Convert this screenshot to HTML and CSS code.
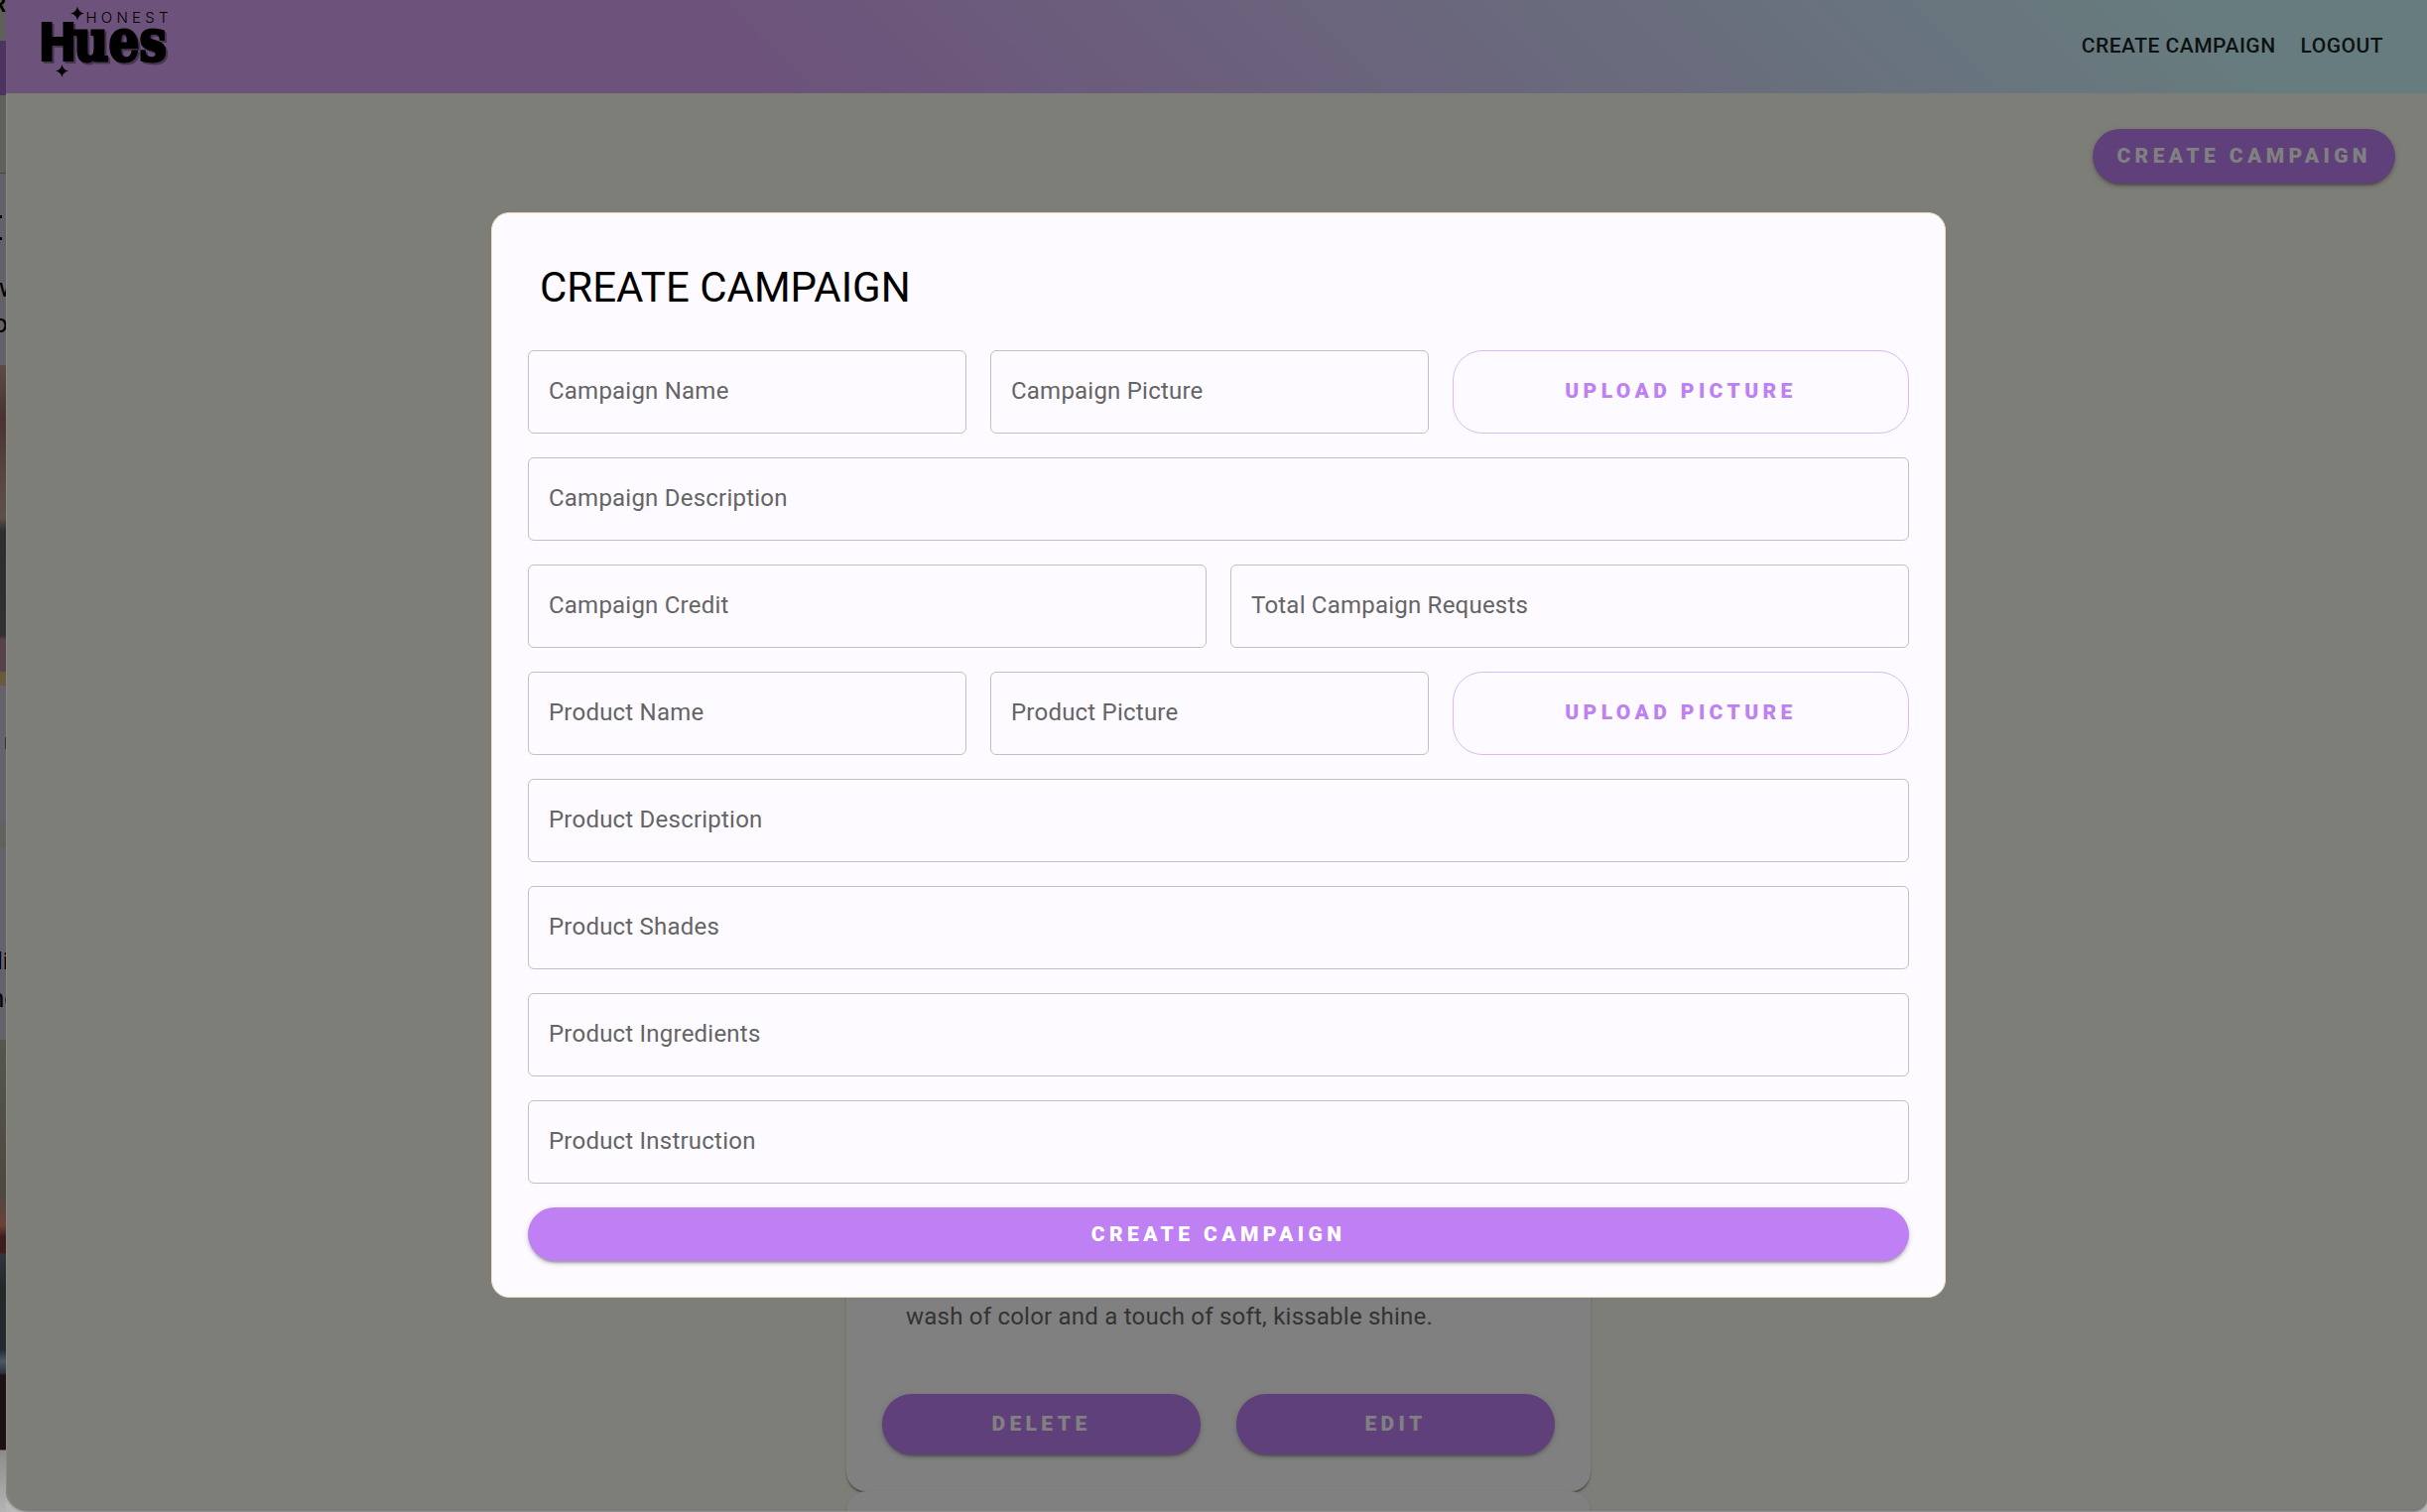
FILE: index.html
```html
<!DOCTYPE html>
<html lang="en">
<head>
<meta charset="utf-8">
<title>Honest Hues</title>
<link rel="stylesheet" href="styles.css">
</head>
<body>
<aside class="backwindow">
  <span class="bw-text bw-r">R</span>
  <span class="bw-text bw-v">w</span>
  <span class="bw-text bw-o">o</span>
  <span class="bw-text bw-li">li</span>
  <span class="bw-text bw-nc">nc</span>
</aside>
<div class="window">
  <header class="topbar">
    <svg class="logo" viewBox="0 0 140 90" role="img" aria-label="Honest Hues">
      <path d="M36 6.500 Q37 12.500 43 13.500 Q37 14.500 36 20.500 Q35 14.500 29 13.500 Q35 12.500 36 6.500Z"/>
      <path d="M20.500 65 Q21.500 70.500 27 71.500 Q21.500 72.500 20.500 78 Q19.500 72.500 14 71.500 Q19.500 70.500 20.500 65Z"/>
      <text class="logo-small" x="44.500" y="23" textLength="83">HONEST</text>
      <g class="logo-word">
        <text class="logo-h" x="-2" y="61" textLength="36" lengthAdjust="spacingAndGlyphs">H</text>
        <text class="logo-ues" x="32" y="61" textLength="94" lengthAdjust="spacingAndGlyphs">ues</text>
      </g>
    </svg>
    <nav class="nav">
      <a>CREATE CAMPAIGN</a>
      <a>LOGOUT</a>
    </nav>
  </header>
  <div class="toolbar">
    <button class="btn btn-dim">CREATE CAMPAIGN</button>
  </div>
  <main class="cards">
    <article class="card">
      <p class="card-text">wash of color and a touch of soft, kissable shine.</p>
      <div class="card-actions">
        <button class="btn btn-dim">DELETE</button>
        <button class="btn btn-dim">EDIT</button>
      </div>
    </article>
    <article class="card card-next"></article>
  </main>
</div>
<section class="modal">
  <h1 class="modal-title">CREATE CAMPAIGN</h1>
  <form class="form">
    <div class="row row-upload">
      <label class="field">Campaign Name</label>
      <label class="field">Campaign Picture</label>
      <button type="button" class="upload">UPLOAD PICTURE</button>
    </div>
    <label class="field">Campaign Description</label>
    <div class="row row-half">
      <label class="field">Campaign Credit</label>
      <label class="field">Total Campaign Requests</label>
    </div>
    <div class="row row-upload">
      <label class="field">Product Name</label>
      <label class="field">Product Picture</label>
      <button type="button" class="upload">UPLOAD PICTURE</button>
    </div>
    <label class="field">Product Description</label>
    <label class="field">Product Shades</label>
    <label class="field">Product Ingredients</label>
    <label class="field">Product Instruction</label>
    <button type="button" class="btn btn-submit">CREATE CAMPAIGN</button>
  </form>
</section>
</body>
</html>
```
FILE: styles.css
```css
* { box-sizing: border-box; }
body {
  margin: 0;
  width: 2446px;
  height: 1524px;
  position: relative;
  overflow: hidden;
  display: flex;
  background: #b8b8b8;
  font-family: Roboto, "Liberation Sans", sans-serif;
}
/* sliver of the window lying behind */
.backwindow {
  width: 6px;
  height: 1524px;
  flex: none;
  position: relative;
  background:
    linear-gradient(#000, #000) 0 217px / 2px 3px no-repeat,
    linear-gradient(#000, #000) 0 239px / 2px 3px no-repeat,
    linear-gradient(#333, #333) 5px 743px / 1px 12px no-repeat,
    linear-gradient(180deg,
    #5f5f5b 0 41px, #4c3360 41px 96px, #60605c 96px 174px, #444 174px 175px, #64606a 175px 368px,
    #5c4c44 368px, #4a3232 421px, #5a4843 490px, #5c5048 522px, #2d2e30 535px, #303132 640px,
    #57414b 645px 676px, #6a5a3c 678px 691px, #66626c 691px 830px, #62625c 830px 855px,
    #66626c 855px 1048px, #55574f 1048px, #4d4840 1200px, #6b4236 1235px, #3c1d19 1247px 1262px,
    #30363b 1264px, #242829 1300px, #23292f 1360px, #4a5a68 1372px, #2b333b 1384px, #1d1113 1386px 1461px,
    #8c8c8c 1462px, #b4b4b4 1524px);
}
.bw-text { position: absolute; left: 0; width: 6px; overflow: hidden; font-size: 26px; line-height: 26px; white-space: nowrap; color: #000; }
.bw-r { top: -9px; text-indent: -9px; font-size: 24px; font-weight: 500; }
.bw-v { top: 277px; text-indent: -1px; }
.bw-o { top: 313px; text-indent: -7px; }
.bw-li { top: 956px; text-indent: -3px; font-size: 24px; }
.bw-nc { top: 993px; text-indent: -10px; }

.window {
  flex: 1;
  height: 1523px;
  background: #7e7e78;
  border-radius: 0 0 14px 22px;
  box-shadow: 0 0 3px rgba(0, 0, 0, .6), inset 1px 0 0 #888884;
  overflow: hidden;
  display: flex;
  flex-direction: column;
}
.topbar {
  height: 94px;
  flex: none;
  display: flex;
  justify-content: space-between;
  align-items: flex-start;
  padding: 0 44px 0 36px;
  background: linear-gradient(45deg, #6d527b 0%, #6d527b 30%, #677c7e 90%);
}
.logo { width: 140px; height: 90px; overflow: visible; }
.logo-small { font: 300 15px Inter, sans-serif; }
.logo-h { font: 900 53px Roboto, sans-serif; stroke: #000; stroke-width: 2px; }
.logo-ues { font: 900 58px "DejaVu Serif", serif; stroke: #000; stroke-width: 3px; }
.logo-word { filter: drop-shadow(2px 2px 0 rgba(0, 0, 0, .35)); }
.nav { display: flex; gap: 25px; padding-top: 33px; font-size: 21px; font-weight: 500; line-height: 26px; letter-spacing: .5px; color: #0e1112; }
.toolbar { display: flex; justify-content: flex-end; padding: 36px 32px 0 0; }
.btn {
  border: 0;
  height: 55px;
  padding: 0 24px;
  border-radius: 30px;
  font: 900 21px/37px Roboto, sans-serif;
  letter-spacing: 4.400px;
  color: #fff;
  background: #bf80f3;
  box-shadow: 0 4.500px 1.500px -3px rgba(0, 0, 0, .2), 0 3px 3px rgba(0, 0, 0, .14), 0 1.500px 7.500px rgba(0, 0, 0, .12);
}
.btn-dim { color: #808080; background: #60407a; }
.cards { width: 750px; margin: auto auto 0; transform: translateX(2px); flex: none; }
.card {
  height: 300px;
  background: #808080;
  border-radius: 20px;
  padding: 0 36px 37px;
  display: flex;
  flex-direction: column;
  justify-content: flex-end;
  box-shadow: 0 3px 1.500px -1.500px rgba(0, 0, 0, .25), 0 1.500px 3px rgba(0, 0, 0, .2);
}
.card-next { height: 20px; border-radius: 20px 20px 0 0; padding: 0; }
.card-text { margin: 0 24px 60px; font-size: 24px; line-height: 36px; letter-spacing: .22px; color: #333; white-space: nowrap; }
.card-actions { display: grid; grid-template-columns: 1fr 1fr; gap: 36px; }
.card-actions .btn { height: 61px; }

.modal {
  position: absolute;
  left: 495px;
  top: 214px;
  width: 1466px;
  height: 1094px;
  padding: 36px;
  border: 1px solid #ecdcbc;
  border-radius: 18px;
  background: #fdfbff;
}
.modal-title { margin: 0; padding-left: 12px; height: 102px; font-size: 42px; font-weight: 400; line-height: 78px; color: #000; }
.form { display: flex; flex-direction: column; gap: 24px; }
.row { display: grid; gap: 24px; }
.row-upload { grid-template-columns: 442px 442px 460px; }
.row-half { grid-template-columns: 1fr 1fr; }
.field {
  height: 84px;
  border: 1px solid #c2c0c4;
  border-radius: 6px;
  padding: 0 20px;
  font-size: 24px;
  line-height: 81px;
  letter-spacing: .22px;
  color: #656467;
}
.upload {
  height: 84px;
  padding: 0 0 2px;
  border: 1px solid #dbbaf8;
  border-radius: 30px;
  background: none;
  color: #bf80f3;
  font: 900 21px/37px Roboto, sans-serif;
  letter-spacing: 4.400px;
}
.btn-submit { height: 54px; border-radius: 27px; }
```
